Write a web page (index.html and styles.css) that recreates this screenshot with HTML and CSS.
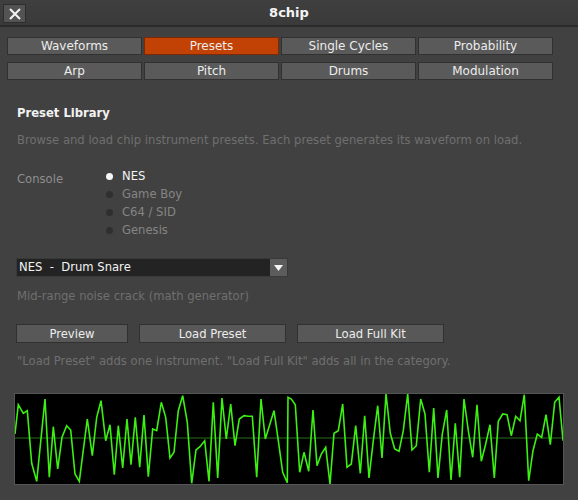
FILE: index.html
```html
<!DOCTYPE html>
<html lang="en">
<head>
    <meta charset="UTF-8">
    <meta name="viewport" content="width=device-width, initial-scale=1.0">
    <title>8chip</title>
    <link rel="stylesheet" href="styles.css">
</head>
<body>
    <!-- Window title bar -->
    <div class="titlebar">
        <button class="close-btn" aria-label="Close">
            <svg width="14" height="14" viewBox="0 0 14 14">
                <path d="M2 2 L12 12 M12 2 L2 12" stroke="#f2f2f2" stroke-width="2" fill="none"/>
            </svg>
        </button>
        <div class="title">8chip</div>
    </div>

    <!-- Page tabs -->
    <div class="tabs">
        <button class="tab">Waveforms</button>
        <button class="tab active">Presets</button>
        <button class="tab">Single Cycles</button>
        <button class="tab">Probability</button>
        <button class="tab">Arp</button>
        <button class="tab">Pitch</button>
        <button class="tab">Drums</button>
        <button class="tab">Modulation</button>
    </div>

    <div class="panel">
        <h2 class="panel-title">Preset Library</h2>
        <p class="hint">Browse and load chip instrument presets. Each preset generates its waveform on load.</p>

        <div class="console-row">
            <div class="console-label">Console</div>
            <div class="radio-list">
                <div class="radio selected"><span class="dot"></span>NES</div>
                <div class="radio"><span class="dot"></span>Game Boy</div>
                <div class="radio"><span class="dot"></span>C64 / SID</div>
                <div class="radio"><span class="dot"></span>Genesis</div>
            </div>
        </div>

        <div class="select">
            <span class="select-text">NES&nbsp; - &nbsp;Drum Snare</span>
            <span class="select-arrow">
                <svg width="9" height="6" viewBox="0 0 9 6"><path d="M0 0 H9 L4.5 6 Z" fill="#f4f4f4"/></svg>
            </span>
        </div>
        <p class="hint desc">Mid-range noise crack (math generator)</p>

        <div class="actions">
            <button class="btn btn-preview">Preview</button>
            <button class="btn">Load Preset</button>
            <button class="btn">Load Full Kit</button>
        </div>
        <p class="hint note">"Load Preset" adds one instrument. "Load Full Kit" adds all in the category.</p>

        <!-- Waveform preview of the current preset -->
        <div class="scope">
            <svg width="548" height="90" viewBox="15 395 548 90">
                <line x1="15" y1="439" x2="563" y2="439" stroke="#1c4a12" stroke-width="1.5"/>
                <polyline id="wave" fill="none" stroke="#3cf012" stroke-width="1.6" stroke-linejoin="miter"/>
            </svg>
        </div>
    </div>

    <script>
        // sample points of the snare waveform (x, y in scope space)
        const samples = [
            [15,435],[18.3,405.7],[23.3,414.3],[27.3,411.7],[31.7,464.3],[36.7,482.3],[45,400],
            [49.3,478.3],[53.3,427.7],[57.7,470],[62,438.3],[66.7,426.7],[70.7,431],[75,475],
            [79.3,482.3],[87.3,420],[92.3,456.7],[96.7,418.3],[101,401.7],[105.7,441.7],[110,425.7],
            [114.3,475.7],[118.3,426.7],[122.7,469],[127,420],[131,465.7],[135.3,418.3],[139.7,468.3],
            [144,416],[148.3,477.7],[152.7,430],[156.7,431.7],[161.3,403.3],[165.7,418.3],[170,459],
            [174,453.3],[178.3,411.7],[182.7,396.7],[187.3,423.3],[191.7,484.3],[196,451],[200,447.7],
            [204.7,441.7],[209,482.3],[213.3,403.3],[217.7,479],[222,399],[226.3,440],[230.7,405],
            [235,446.7],[239.3,420],[244,416.7],[248.3,417.3],[252.3,417.3],[256.7,478.3],[261,400],
            [265.3,440],[274,411.7],[278.3,441.7],[282.7,473.3],[287.3,483.7],[288,398.3],[291.3,400],
            [295.3,405.7],[299.7,473.3],[304,453.3],[308.7,472.3],[313,411],[317,466.7],[321.3,455],
            [325.7,448.3],[330,485],[334,434.3],[338.3,431.7],[342.7,405],[347,468.3],[351.3,465],
            [355.7,426.7],[360.3,474.3],[364.7,416.7],[369,479],[373.3,441.7],[377.7,406.7],[382,459],
            [386,395],[390.3,434.3],[394.7,450],[399,452.3],[403.3,431.7],[407.7,395],[412,451],
            [416.3,446.7],[420.7,400],[425,415],[429.3,473.3],[433.7,409],[438,479],[442.3,435],
            [446.7,411],[451,481],[455.3,424.3],[459.7,478.3],[464,400],[468.3,431.7],[472.7,458.3],
            [477,405.7],[481.3,462.3],[485.7,445],[490,425.7],[494.3,479],[498.3,422.3],[502.7,415],
            [507,415.7],[511.3,436.7],[515.7,417.3],[520,421.7],[524.3,395.7],[528.7,481.7],[533,451.7],
            [537.3,435],[541.7,438.3],[546,415.7],[550.3,445.7],[554.7,403.3],[559,398.3],[563,441.7]
        ];
        document.getElementById('wave').setAttribute('points', samples.map(p => p.join(',')).join(' '));
    </script>
</body>
</html>
```

FILE: styles.css
```css
* {
    margin: 0;
    padding: 0;
    box-sizing: border-box;
    font-family: "DejaVu Sans", sans-serif;
}

body {
    background-color: #414141;
    width: 578px;
    height: 500px;
    overflow: hidden;
    color: #e6e6e6;
    font-size: 12px;
}

button {
    font-family: "DejaVu Sans", sans-serif;
    font-size: 12px;
    color: #ececec;
    cursor: pointer;
}

/* Title bar */
.titlebar {
    position: relative;
    height: 27px;
    background: linear-gradient(#3f3f3f, #3a3a3a);
    border-bottom: 2px solid #2b2b2b;
    display: flex;
    align-items: center;
    justify-content: center;
}

.close-btn {
    position: absolute;
    left: 3px;
    top: 4px;
    width: 23px;
    height: 19px;
    background-color: #535353;
    border: 1px solid #2e2e2e;
    display: flex;
    align-items: center;
    justify-content: center;
}

.title {
    font-weight: bold;
    font-size: 13px;
    color: #f4f4f4;
}

/* Tabs */
.tabs {
    display: grid;
    grid-template-columns: repeat(4, 135px);
    column-gap: 2px;
    row-gap: 7px;
    padding: 10px 0 0 7px;
}

.tab {
    height: 18px;
    background-color: #5a5a5a;
    border: 1px solid #313131;
    line-height: 16px;
}

.tab.active {
    background-color: #c24104;
    border-color: #7a2a06;
}

/* Presets panel */
.panel {
    padding: 26px 0 0 17px;
}

.panel-title {
    font-size: 11.6px;
    font-weight: bold;
    color: #f2f2f2;
    line-height: 14px;
}

.hint {
    color: #6f6f6f;
    font-size: 11.6px;
    line-height: 14px;
    margin-top: 13px;
}

.console-row {
    display: flex;
    margin-top: 20px;
    font-size: 11.6px;
}

.console-label {
    width: 89px;
    color: #8e8e8e;
    padding-top: 3px;
    line-height: 18px;
}

.radio-list {
    display: flex;
    flex-direction: column;
}

.radio {
    display: flex;
    align-items: center;
    height: 18px;
    color: #858585;
    line-height: 18px;
}

.radio .dot {
    width: 7px;
    height: 7px;
    border-radius: 50%;
    background-color: #2f2f2f;
    margin-right: 9px;
}

.radio.selected {
    color: #f4f4f4;
}

.radio.selected .dot {
    background-color: #f6f6f6;
}

/* Preset dropdown */
.select {
    display: flex;
    width: 272px;
    height: 19px;
    margin: 19px 0 0 -1px;
    background-color: #232323;
    border: 1px solid #393939;
    font-size: 11.6px;
}

.select-text {
    flex: 1;
    color: #f4f4f4;
    line-height: 17px;
    padding-left: 2px;
}

.select-arrow {
    width: 17px;
    background-color: #5c5c5c;
    display: flex;
    align-items: center;
    justify-content: center;
}

.desc {
    margin-top: 12px;
}

/* Action buttons */
.actions {
    display: flex;
    gap: 11px;
    margin: 21px 0 0 -1px;
}

.btn {
    height: 19px;
    width: 147px;
    background-color: #585858;
    border: 1px solid #313131;
    font-size: 11.6px;
}

.btn-preview {
    width: 112px;
}

.note {
    margin-top: 11px;
}

/* Waveform scope */
.scope {
    width: 550px;
    height: 92px;
    margin: 25px 0 0 -3px;
    background-color: #000;
    border: 1px solid #555;
}

.scope svg {
    display: block;
}
```
